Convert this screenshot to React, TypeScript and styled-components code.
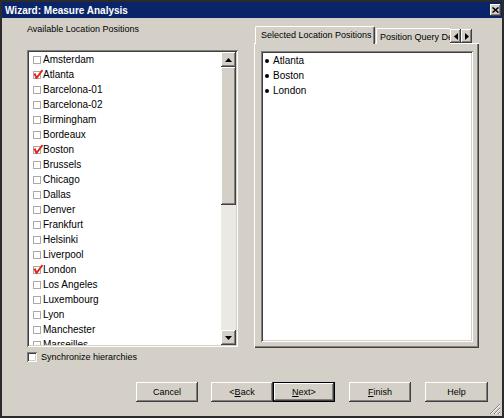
import styled, { createGlobalStyle } from 'styled-components';

const GlobalStyle = createGlobalStyle`
  html, body {
    margin: 0;
    padding: 0;
    background: #d4d0c8;
  }
  body {
    font-family: "Liberation Sans", Arial, sans-serif;
    color: #000;
  }
`;

const raisedShadow = `
  box-shadow: inset -1px -1px #404040, inset 1px 1px #ffffff,
    inset -2px -2px #808080, inset 2px 2px #d4d0c8;
`;

const sunkenShadow = `
  box-shadow: inset 1px 1px #808080, inset -1px -1px #ffffff,
    inset 2px 2px #404040, inset -2px -2px #d4d0c8;
`;

const Window = styled.div`
    position: relative;
    width: 504px;
    height: 418px;
    box-sizing: border-box;
    border: 2px solid #2b2b2b;
    background: #d4d0c8;
    display: flex;
    flex-direction: column;
`;

const TitleBar = styled.div`
    height: 16px;
    background: #0a246a;
    display: flex;
    align-items: center;
    justify-content: space-between;
    padding: 0 1px 0 3px;
`;

const Title = styled.div`
    color: #fff;
    font-weight: bold;
    font-size: 10px;
    white-space: nowrap;
`;

const CloseButton = styled.div`
    width: 11px;
    height: 12px;
    background: #d4d0c8;
    ${raisedShadow};
    display: flex;
    align-items: center;
    justify-content: center;
`;

const Body = styled.div`
    flex: 1;
    display: flex;
    flex-direction: column;
`;

const Columns = styled.div`
    display: flex;
    align-items: flex-start;
    padding-left: 25px;
`;

const LeftColumn = styled.div`
    width: 211px;
    padding-top: 6px;
    display: flex;
    flex-direction: column;
`;

const Label = styled.div`
    font-size: 9px;
    line-height: 11px;
    margin-bottom: 15px;
    white-space: nowrap;
`;

const ListBox = styled.div`
    height: 297px;
    box-sizing: border-box;
    padding: 2px;
    background: #fff;
    ${sunkenShadow};
    display: flex;
`;

const Items = styled.div`
    flex: 1;
    overflow: hidden;
`;

const CityRow = styled.div`
    height: 15px;
    display: flex;
    align-items: center;
    padding-left: 4px;
    font-size: 10px;
    white-space: nowrap;
`;

const CheckSlot = styled.span`
    position: relative;
    width: 9px;
    height: 9px;
    margin-right: 1px;
    flex: none;
`;

const SmallBox = styled.span`
    position: absolute;
    left: 0;
    top: 1px;
    width: 6px;
    height: 6px;
    border: 1px solid #a9a9a9;
    background: #fff;
`;

const Tick = styled.svg`
    position: absolute;
    left: 0;
    top: -1px;
`;

const ScrollBar = styled.div`
    width: 15px;
    display: flex;
    flex-direction: column;
    background: #ebe9e4;
`;

const ScrollButton = styled.div`
    height: 15px;
    flex: none;
    background: #d4d0c8;
    ${raisedShadow};
    display: flex;
    align-items: center;
    justify-content: center;
`;

const Thumb = styled.div`
    height: 138px;
    flex: none;
    background: #d4d0c8;
    ${raisedShadow};
`;

const Track = styled.div`
    flex: 1;
`;

const SyncRow = styled.div`
    margin-top: 5px;
    height: 10px;
    display: flex;
    align-items: center;
`;

const SyncBox = styled.span`
    width: 10px;
    height: 10px;
    background: #fff;
    ${sunkenShadow};
    flex: none;
`;

const SyncLabel = styled.span`
    margin-left: 4px;
    font-size: 9px;
    white-space: nowrap;
`;

const RightColumn = styled.div`
    width: 225px;
    margin-left: 16px;
    padding-top: 8px;
    display: flex;
    flex-direction: column;
`;

const TabRow = styled.div`
    position: relative;
    z-index: 1;
    height: 18px;
    display: flex;
    align-items: flex-end;
    padding-right: 7px;
    margin-bottom: -1px;
`;

const TabClip = styled.div`
    flex: 1;
    min-width: 0;
    height: 100%;
    display: flex;
    align-items: flex-end;
    overflow: hidden;
`;

const Tab = styled.div<{ $active?: boolean }>`
    flex: none;
    box-sizing: border-box;
    height: ${(p) => (p.$active ? '19px' : '16px')};
    margin-left: 1px;
    margin-bottom: ${(p) => (p.$active ? '-1px' : '0')};
    padding: 0 4px 0 ${(p) => (p.$active ? '5px' : '3px')};
    width: ${(p) => (p.$active ? '120px' : 'auto')};
    background: #d4d0c8;
    border-top: 1px solid #fff;
    border-left: 1px solid #fff;
    border-right: 1px solid #404040;
    box-shadow: inset -1px 0 #808080;
    border-radius: 2px 2px 0 0;
    font-size: 9px;
    white-space: nowrap;
    display: flex;
    align-items: ${(p) => (p.$active ? 'flex-start' : 'center')};
    padding-top: ${(p) => (p.$active ? '3px' : '0')};
`;

const TabArrows = styled.div`
    display: flex;
    margin-bottom: 1px;
`;

const TabArrow = styled.div`
    width: 11px;
    height: 14px;
    background: #d4d0c8;
    ${raisedShadow};
    display: flex;
    align-items: center;
    justify-content: center;
`;

const TabPanel = styled.div`
    height: 305px;
    box-sizing: border-box;
    padding: 8px 6px 6px 7px;
    background: #d4d0c8;
    box-shadow: inset 1px 1px #ffffff, inset -1px -1px #404040, inset -2px -2px #808080;
    display: flex;
`;

const SelectedList = styled.div`
    flex: 1;
    padding: 2px;
    background: #fff;
    ${sunkenShadow};
`;

const SelectedRow = styled.div`
    height: 15px;
    display: flex;
    align-items: center;
    padding-left: 2px;
    font-size: 10px;
`;

const Bullet = styled.span`
    width: 4px;
    height: 4px;
    border-radius: 50%;
    background: #000;
    margin-right: 4px;
    flex: none;
`;

const Footer = styled.div`
    margin-top: auto;
    display: flex;
    justify-content: flex-end;
    padding: 0 14px 14px 0;
`;

const Button = styled.div<{ $default?: boolean; $gap?: number; $width?: number }>`
    width: ${(p) => p.$width ?? 62}px;
    height: 20px;
    box-sizing: border-box;
    margin-right: ${(p) => p.$gap ?? 0}px;
    background: #d4d0c8;
    font-size: 9px;
    display: flex;
    align-items: center;
    justify-content: center;
    ${(p) =>
        p.$default
            ? `box-shadow: inset 0 0 0 1px #000, inset -2px -2px #404040, inset 2px 2px #ffffff, inset -3px -3px #808080;`
            : raisedShadow};
`;

const Grip = styled.svg`
    position: absolute;
    right: 1px;
    bottom: 1px;
`;

const cities = [
    'Amsterdam',
    'Atlanta',
    'Barcelona-01',
    'Barcelona-02',
    'Birmingham',
    'Bordeaux',
    'Boston',
    'Brussels',
    'Chicago',
    'Dallas',
    'Denver',
    'Frankfurt',
    'Helsinki',
    'Liverpool',
    'London',
    'Los Angeles',
    'Luxembourg',
    'Lyon',
    'Manchester',
    'Marseilles',
];

const checked = ['Atlanta', 'Boston', 'London'];

const Triangle = ({ dir }: { dir: 'up' | 'down' | 'left' | 'right' }) => {
    const points = {
        up: '0,4 7,4 3.5,0',
        down: '0,0 7,0 3.5,4',
        left: '4,0 4,7 0,3.5',
        right: '0,0 0,7 4,3.5',
    }[dir];
    const horizontal = dir === 'up' || dir === 'down';
    return (
        <svg width={horizontal ? 7 : 4} height={horizontal ? 4 : 7}>
            <polygon points={points} fill="#000" />
        </svg>
    );
};

const App = () => (
    <>
        <GlobalStyle />
        <Window>
            <TitleBar>
                <Title>Wizard: Measure Analysis</Title>
                <CloseButton>
                    <svg width="7" height="6">
                        <path d="M0.5 0.5 L6.5 5.5 M6.5 0.5 L0.5 5.5" stroke="#000" strokeWidth="1.6" />
                    </svg>
                </CloseButton>
            </TitleBar>
            <Body>
                <Columns>
                    <LeftColumn>
                        <Label>Available Location Positions</Label>
                        <ListBox>
                            <Items>
                                {cities.map((city) => (
                                    <CityRow key={city}>
                                        <CheckSlot>
                                            <SmallBox />
                                            {checked.includes(city) && (
                                                <Tick width="10" height="10">
                                                    <path
                                                        d="M1.5 4.5 L3.5 9 L9.5 1"
                                                        stroke="#e3261f"
                                                        strokeWidth="2"
                                                        fill="none"
                                                    />
                                                </Tick>
                                            )}
                                        </CheckSlot>
                                        {city}
                                    </CityRow>
                                ))}
                            </Items>
                            <ScrollBar>
                                <ScrollButton>
                                    <Triangle dir="up" />
                                </ScrollButton>
                                <Thumb />
                                <Track />
                                <ScrollButton>
                                    <Triangle dir="down" />
                                </ScrollButton>
                            </ScrollBar>
                        </ListBox>
                        <SyncRow>
                            <SyncBox />
                            <SyncLabel>Synchronize hierarchies</SyncLabel>
                        </SyncRow>
                    </LeftColumn>
                    <RightColumn>
                        <TabRow>
                            <TabClip>
                                <Tab $active>Selected Location Positions</Tab>
                                <Tab>Position Query Definition</Tab>
                            </TabClip>
                            <TabArrows>
                                <TabArrow>
                                    <Triangle dir="left" />
                                </TabArrow>
                                <TabArrow>
                                    <Triangle dir="right" />
                                </TabArrow>
                            </TabArrows>
                        </TabRow>
                        <TabPanel>
                            <SelectedList>
                                {checked.map((city) => (
                                    <SelectedRow key={city}>
                                        <Bullet />
                                        {city}
                                    </SelectedRow>
                                ))}
                            </SelectedList>
                        </TabPanel>
                    </RightColumn>
                </Columns>
                <Footer>
                    <Button $gap={13}>Cancel</Button>
                    <Button>
                        &lt;<u>B</u>ack
                    </Button>
                    <Button $default $gap={14}>
                        <u>N</u>ext&gt;
                    </Button>
                    <Button $gap={14}>
                        <u>F</u>inish
                    </Button>
                    <Button $width={63}>Help</Button>
                </Footer>
            </Body>
            <Grip width="12" height="12">
                <path d="M11 1 L1 11 M11 5 L5 11 M11 9 L9 11" stroke="#808080" strokeWidth="1" />
                <path d="M11 2 L2 11 M11 6 L6 11 M11 10 L10 11" stroke="#ffffff" strokeWidth="1" />
            </Grip>
        </Window>
    </>
);

export default App;
